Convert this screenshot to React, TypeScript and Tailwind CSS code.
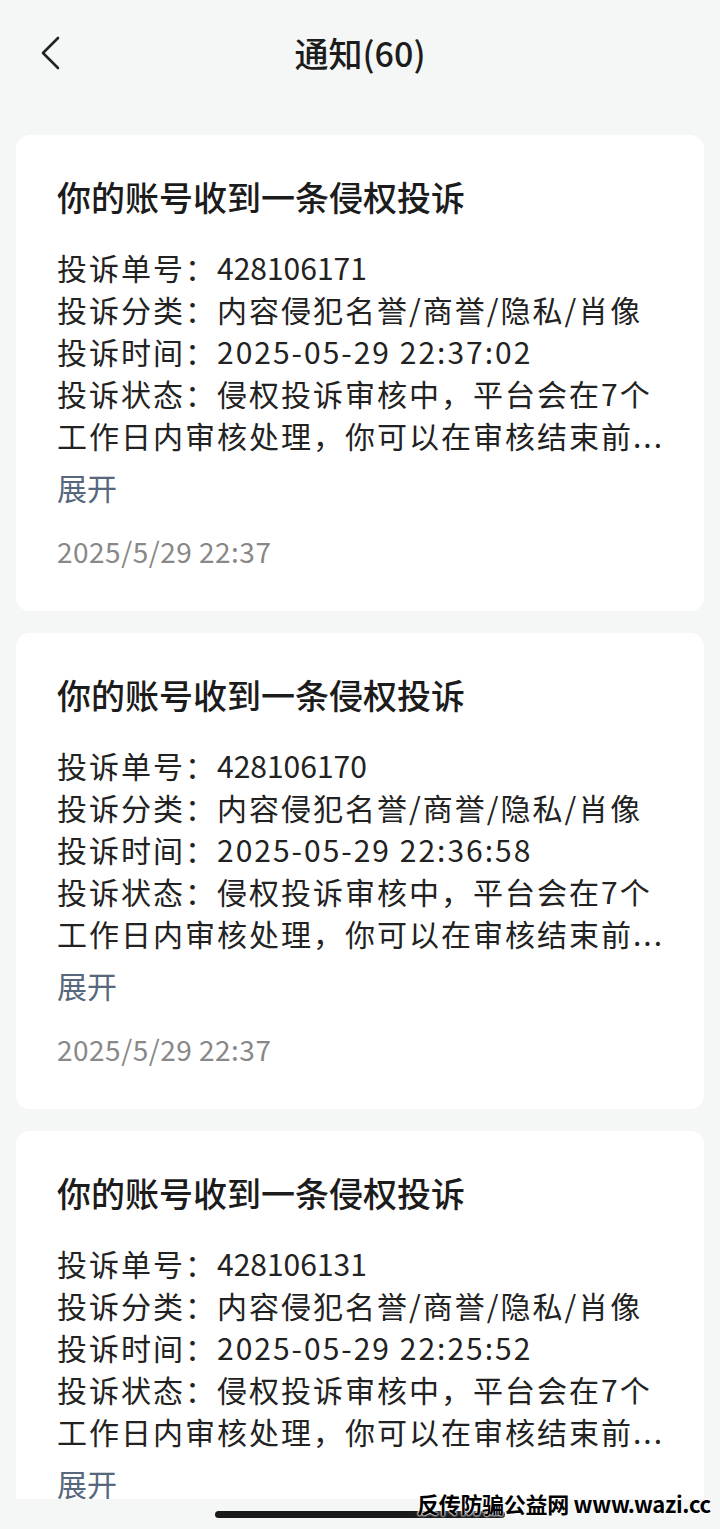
import React from "react";

const notices = [
  { id: "428106171", time: "2025-05-29 22:37:02", date: "2025/5/29 22:37" },
  { id: "428106170", time: "2025-05-29 22:36:58", date: "2025/5/29 22:37" },
  { id: "428106131", time: "2025-05-29 22:25:52", date: "2025/5/29 22:26" },
];

const font = { fontFamily: '"Noto Sans CJK SC", "Noto Sans", sans-serif' };

const NoticeCard = ({ id, time, date }: { id: string; time: string; date: string }) => {
  return (
    <div className="bg-white rounded-[14px] pl-[41px] pr-[24px] pt-10 pb-10 shrink-0">
      <div className="text-[34px] leading-[44px] font-medium text-[#1c1c1c]">你的账号收到一条侵权投诉</div>
      <div className="mt-[27px] text-[30px] leading-[42px] tracking-[2px] text-[#222] whitespace-nowrap">
        <div>
          投诉单号：<span className="tracking-normal">{id}</span>
        </div>
        <div>投诉分类：内容侵犯名誉/商誉/隐私/肖像</div>
        <div>投诉时间：{time}</div>
        <div>投诉状态：侵权投诉审核中，平台会在7个</div>
        <div>工作日内审核处理，你可以在审核结束前...</div>
      </div>
      <div className="mt-[10px] text-[30px] leading-[42px] text-[#57677c]">展开</div>
      <div className="mt-[23px] text-[28px] leading-[40px] tracking-[0.5px] text-[#888]">{date}</div>
    </div>
  );
};

export default function App() {
  return (
    <div className="relative w-[720px] h-[1529px] overflow-hidden bg-[#f5f6f6] flex flex-col" style={font}>
      {/* header */}
      <div className="relative h-[104px] shrink-0 flex items-center justify-center">
        <svg className="absolute left-[40px] top-[36px]" width="22" height="34" viewBox="0 0 22 34" fill="none">
          <path d="M18 2 L3 17 L18 32" stroke="#222" strokeWidth="2.6" strokeLinecap="round" strokeLinejoin="round" />
        </svg>
        <div className="text-[34px] font-medium text-[#1c1c1c]">通知(60)</div>
      </div>

      <div className="flex-1 overflow-hidden px-4 pt-[31px] flex flex-col gap-[22px]">
        {notices.map((n) => (
          <NoticeCard key={n.id} {...n} />
        ))}
      </div>

      {/* bottom bar */}
      <div className="relative h-[30px] shrink-0 bg-[#f5f6f6] flex items-center justify-center">
        <div className="w-[290px] h-[7px] rounded-full bg-[#1a1a1a]" />
      </div>

      {/* watermark */}
      <div className="absolute left-[417px] top-[1488px] text-[22px] leading-[30px] font-bold text-black whitespace-nowrap tracking-[-0.3px] [text-shadow:0_0_2px_#fff,0_0_2px_#fff,0_0_3px_#fff]">
        反传防骗公益网 www.wazi.cc
      </div>
    </div>
  );
}
